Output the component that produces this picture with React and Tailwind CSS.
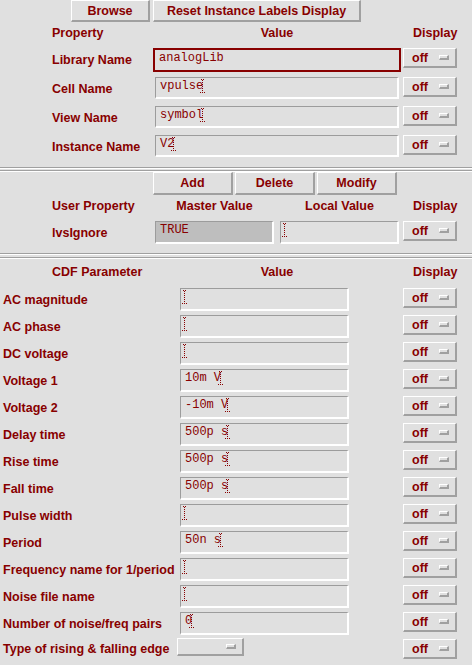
import React from "react";

const LABEL = "font-bold text-[12.5px] leading-[14px] text-[#880000]";
const RAISED =
  "border-t border-l border-t-white border-l-white border-r-2 border-b-2 border-r-[#a0a0a0] border-b-[#a0a0a0]";
const SUNKEN =
  "border-t border-l border-t-[#9c9c9c] border-l-[#9c9c9c] border-r-2 border-b-2 border-r-white border-b-white";

function Cursor() {
  const dots = [
    [1, 0], [3, 0], [2, 1], [2, 3], [2, 5], [2, 7], [2, 9], [2, 11], [0, 13], [2, 13], [4, 13],
  ];
  return (
    <svg width="5" height="14" viewBox="0 0 5 14" className="shrink-0 -ml-[3px]" fill="#880000">
      {dots.map(([x, y], i) => (
        <rect key={i} x={x} y={y} width="1" height="1" />
      ))}
    </svg>
  );
}

function Btn({ className, children }) {
  return (
    <div className={`${RAISED} flex items-center justify-center ${LABEL} ${className}`}>{children}</div>
  );
}

function Indicator() {
  return (
    <div className="w-[10px] h-[5px] border-t border-l border-t-white border-l-white border-r-2 border-b-2 border-r-[#a0a0a0] border-b-[#a0a0a0]" />
  );
}

function Off() {
  return (
    <div className={`${RAISED} w-[54px] h-[20px] shrink-0 flex items-center`}>
      <span className={`${LABEL} ml-[8px]`}>off</span>
      <div className="ml-auto mr-[6px]">
        <Indicator />
      </div>
    </div>
  );
}

function Field({ className, text, cursor = true, bg = "" }) {
  return (
    <div className={`${SUNKEN} ${bg} shrink-0 flex items-start pl-[4px] pt-[1px] overflow-hidden ${className}`}>
      {text ? (
        <span className="whitespace-pre text-[12px] leading-[14px] text-[#880000] [font-family:'Liberation_Mono',monospace]">
          {text}
        </span>
      ) : null}
      {cursor ? <Cursor /> : null}
    </div>
  );
}

function Separator({ gap }) {
  return (
    <div className="w-full">
      <div className="h-px bg-[#a0a0a0]" />
      <div className="h-px bg-white" />
      <div className={gap} />
      <div className="h-px bg-[#a0a0a0]" />
      <div className="h-px bg-white" />
    </div>
  );
}

const props = [
  { label: "Library Name", text: "analogLib", focused: true },
  { label: "Cell Name", text: "vpulse" },
  { label: "View Name", text: "symbol" },
  { label: "Instance Name", text: "V2" },
];

const cdf = [
  ["AC magnitude", ""],
  ["AC phase", ""],
  ["DC voltage", ""],
  ["Voltage 1", "10m V"],
  ["Voltage 2", "-10m V"],
  ["Delay time", "500p s"],
  ["Rise time", "500p s"],
  ["Fall time", "500p s"],
  ["Pulse width", ""],
  ["Period", "50n s"],
  ["Frequency name for 1/period", ""],
  ["Noise file name", ""],
  ["Number of noise/freq pairs", "0"],
];

export default function App() {
  return (
    <div className="w-[472px] h-[665px] overflow-hidden bg-[#e0e0e0] [font-family:'Liberation_Sans',Arial,sans-serif]">
      {/* top buttons */}
      <div className="flex pl-[71px] gap-[3px] h-[23px]">
        <Btn className="w-[79px] h-[22px]">Browse</Btn>
        <Btn className="w-[208px] h-[22px]">Reset Instance Labels Display</Btn>
      </div>

      {/* header */}
      <div className="flex items-center h-[20px]">
        <div className={`${LABEL} w-[153px] pl-[52px]`}>Property</div>
        <div className={`${LABEL} w-[248px] text-center`}>Value</div>
        <div className={`${LABEL} pl-[12px]`}>Display</div>
      </div>

      <div className="mt-[5px]">
        {props.map((p) => (
          <div key={p.label} className="flex items-start h-[29px]">
            <div className={`${LABEL} w-[153px] pl-[52px] h-[24px] flex items-center whitespace-nowrap`}>
              {p.label}
            </div>
            <div className="w-[248px] shrink-0">
              {p.focused ? (
                <div className="w-[248px] h-[24px] border-2 border-[#880000] pl-[4px] pt-[1px] flex items-start">
                  <span className="whitespace-pre text-[12px] leading-[14px] text-[#880000] [font-family:'Liberation_Mono',monospace]">
                    {p.text}
                  </span>
                </div>
              ) : (
                <Field className="ml-[2px] w-[244px] h-[22px]" text={p.text} />
              )}
            </div>
            <div className="ml-[2px]">
              <Off />
            </div>
          </div>
        ))}
      </div>

      <div className="mt-[3px]">
        <Separator gap="h-px" />
      </div>

      {/* user property section */}
      <div className="flex pl-[153px] gap-[2px] h-[23px]">
        <Btn className="w-[80px] h-[23px]">Add</Btn>
        <Btn className="w-[80px] h-[23px]">Delete</Btn>
        <Btn className="w-[80px] h-[23px]">Modify</Btn>
      </div>

      <div className="flex items-center h-[20px] mt-[1px]">
        <div className={`${LABEL} w-[155px] pl-[52px] whitespace-nowrap`}>User Property</div>
        <div className={`${LABEL} w-[119px] text-center`}>Master Value</div>
        <div className={`${LABEL} w-[119px] ml-[6px] text-center`}>Local Value</div>
        <div className={`${LABEL} pl-[14px]`}>Display</div>
      </div>

      <div className="flex items-start h-[23px] mt-[5px]">
        <div className={`${LABEL} w-[155px] pl-[52px] h-[23px] flex items-center`}>lvsIgnore</div>
        <Field className="w-[119px] h-[23px]" text="TRUE" cursor={false} bg="bg-[#bebebe]" />
        <Field className="w-[119px] h-[23px] ml-[6px]" text="" />
        <div className="ml-[4px]">
          <Off />
        </div>
      </div>

      <div className="mt-[9px]">
        <Separator gap="h-[2px]" />
      </div>

      {/* CDF section */}
      <div className="flex items-center h-[20px] mt-[3px]">
        <div className={`${LABEL} w-[153px] pl-[52px]`}>CDF Parameter</div>
        <div className={`${LABEL} w-[248px] text-center`}>Value</div>
        <div className={`${LABEL} pl-[12px]`}>Display</div>
      </div>

      <div className="mt-[6px]">
        {cdf.map(([label, val]) => (
          <div key={label} className="flex items-start h-[27px]">
            <div className={`${LABEL} w-[180px] pl-[3px] h-[23px] flex items-center whitespace-nowrap`}>{label}</div>
            <Field className="w-[169px] h-[23px]" text={val} />
            <div className="ml-[54px]">
              <Off />
            </div>
          </div>
        ))}
        <div className="flex items-start h-[27px]">
          <div className={`${LABEL} w-[177px] pl-[3px] h-[20px] flex items-center whitespace-nowrap`}>
            Type of rising &amp; falling edge
          </div>
          <div className={`${RAISED} w-[67px] h-[18px] -mt-[1px] flex items-center`}>
            <div className="ml-auto mr-[6px]">
              <Indicator />
            </div>
          </div>
          <div className="ml-[159px]">
            <Off />
          </div>
        </div>
      </div>
    </div>
  );
}
